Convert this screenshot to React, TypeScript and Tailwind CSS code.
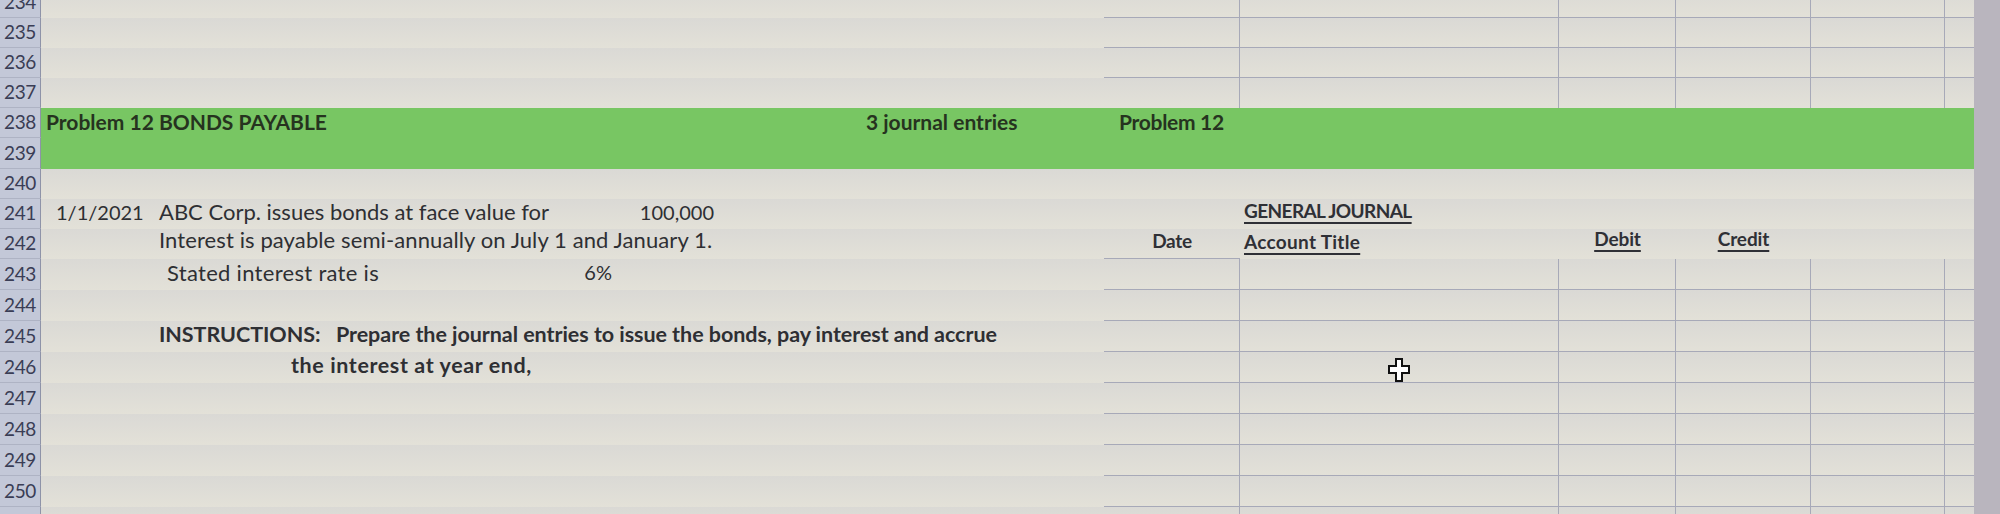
import React from "react";

const FONT = { fontFamily: "Lato, 'Open Sans', Arial, sans-serif" } as const;

const ROWS: { n: number; h: string }[] = [
  { n: 234, h: "h-[30px]" },
  { n: 235, h: "h-[30px]" },
  { n: 236, h: "h-[30px]" },
  { n: 237, h: "h-[30px]" },
  { n: 238, h: "h-[30px]" },
  { n: 239, h: "h-[31px]" },
  { n: 240, h: "h-[30px]" },
  { n: 241, h: "h-[30px]" },
  { n: 242, h: "h-[30px]" },
  { n: 243, h: "h-[31px]" },
  { n: 244, h: "h-[31px]" },
  { n: 245, h: "h-[31px]" },
  { n: 246, h: "h-[31px]" },
  { n: 247, h: "h-[31px]" },
  { n: 248, h: "h-[31px]" },
  { n: 249, h: "h-[31px]" },
  { n: 250, h: "h-[31px]" },
  { n: 251, h: "h-[31px]" },
];

const COLW = ["w-[136px]", "w-[319px]", "w-[117px]", "w-[135px]", "w-[134px]", "w-[29px]"];

const HEAD = "text-[19px] font-bold text-[#2f3036] whitespace-nowrap";

function JournalCells({ row }: { row: number }) {
  const top = row >= 234 && row <= 237;
  const bottom = row >= 243;
  return (
    <div className="flex h-full w-[870px] shrink-0">
      {COLW.map((w, i) => {
        const cls: string[] = [w, "h-full", "shrink-0", "flex", "items-center", "whitespace-nowrap"];
        if (top && row !== 237) cls.push("border-b", "border-[#a7a9b8]");
        if ((top || bottom) && i < 5) cls.push("border-r", "border-[#a7a9b8]");
        if (bottom) cls.push("border-b", "border-[#a7a9b8]");
        if (row === 242 && i === 0) cls.push("border-b", "border-[#a7a9b8]");
        let content: React.ReactNode = null;
        if (row === 241 && i === 1)
          content = (
            <span className={`${HEAD} pl-[4px] pb-[6px] tracking-[-0.6px] underline decoration-2 underline-offset-[4px]`}>
              GENERAL JOURNAL
            </span>
          );
        if (row === 242 && i === 0)
          content = <span className={`${HEAD} w-full pb-[4px] text-center tracking-[-0.3px]`}>Date</span>;
        if (row === 242 && i === 1)
          content = (
            <span className={`${HEAD} pl-[4px] pb-[4px] tracking-[0.3px] underline decoration-2 underline-offset-[4px]`}>
              Account Title
            </span>
          );
        if (row === 242 && i === 2)
          content = (
            <span className="w-full pb-[10px] text-center">
              <span className={`${HEAD} tracking-[-0.1px] underline decoration-2 underline-offset-[4px]`}>Debit</span>
            </span>
          );
        if (row === 242 && i === 3)
          content = (
            <span className="w-full pb-[10px] text-center">
              <span className={`${HEAD} tracking-[-0.1px] underline decoration-2 underline-offset-[4px]`}>Credit</span>
            </span>
          );
        return (
          <div key={i} className={cls.join(" ")}>
            {content}
          </div>
        );
      })}
    </div>
  );
}

function LeftCells({ row }: { row: number }) {
  const num = "text-[20px] text-[#2e2f33] whitespace-nowrap";
  const txt = "text-[22px] text-[#2e2f33] whitespace-nowrap";
  const bold = "text-[21.5px] font-bold text-[#2e2f33] whitespace-nowrap";
  return (
    <div className="flex h-full w-[1063px] shrink-0 items-center pb-[5px]">
      <div className="w-[114px] shrink-0 pl-[15px]">
        {row === 241 && <span className={num}>1/1/2021</span>}
      </div>
      <div className="flex w-[457px] shrink-0 items-center justify-between">
        {row === 241 && <span className={`${txt} pl-[4px]`}>ABC Corp. issues bonds at face value for</span>}
        {row === 242 && (
          <span className={`${txt} pl-[4px] tracking-[0.1px] -mt-[4px]`}>
            Interest is payable semi-annually on July 1 and January 1.
          </span>
        )}
        {row === 243 && (
          <>
            <span className={`${txt} pl-[12px] tracking-[0.3px]`}>Stated interest rate is</span>
            <span className={num}>6%</span>
          </>
        )}
        {row === 245 && (
          <span className={`${bold} pl-[4px] tracking-[-0.05px]`}>
            INSTRUCTIONS:&nbsp;&nbsp; Prepare the journal entries to issue the bonds, pay interest and accrue
          </span>
        )}
        {row === 246 && <span className={`${bold} pl-[136px] tracking-[0.6px]`}>the interest at year end,</span>}
      </div>
      <div className="w-[102px] shrink-0 text-right">
        {row === 241 && <span className={num}>100,000</span>}
      </div>
    </div>
  );
}

function GreenRow({ row }: { row: number }) {
  const g = "text-[21px] font-bold text-[#26331f] whitespace-nowrap";
  return (
    <div className="flex h-full w-full items-center bg-[#78c663] pb-[2px]">
      {row === 238 && (
        <>
          <div className={`${g} w-[825px] shrink-0 pl-[5px]`}>Problem 12 BONDS PAYABLE</div>
          <div className={`${g} w-[238px] shrink-0`}>3 journal entries</div>
          <div className={`${g} pl-[15px] tracking-[-0.3px]`}>Problem 12</div>
        </>
      )}
    </div>
  );
}

export default function App() {
  return (
    <div className="relative flex h-[514px] w-[2000px] overflow-hidden bg-[#dcdbd5]" style={FONT}>
      <div className="flex w-[1974px] shrink-0 flex-col -mt-[12px]">
        {ROWS.map(({ n, h }) => (
          <div key={n} className={`flex ${h} shrink-0`}>
            <div className="flex h-full w-[41px] shrink-0 items-center justify-center border-r border-b border-r-[#8e93a8] border-b-[#aeb3c4] bg-[#c3c8d8] text-[19px] tracking-[-0.3px] text-[#3a3d55]">
              {n <= 250 ? n : ""}
            </div>
            <div className="flex h-full flex-1 bg-linear-to-b from-[#dad9d5] to-[#e3e1d8]">
              {n === 238 || n === 239 ? (
                <GreenRow row={n} />
              ) : (
                <>
                  <LeftCells row={n} />
                  <JournalCells row={n} />
                </>
              )}
            </div>
          </div>
        ))}
      </div>
      <div className="h-full w-[26px] shrink-0 bg-[#b9b5be]" />
      <svg className="absolute left-[1388px] top-[358px]" width="22" height="24" viewBox="0 0 22 24">
        <polygon
          points="8,1 14,1 14,8 21,8 21,15 14,15 14,23 8,23 8,15 1,15 1,8 8,8"
          fill="#ffffff"
          stroke="#111111"
          strokeWidth="2"
          strokeLinejoin="miter"
        />
      </svg>
    </div>
  );
}
